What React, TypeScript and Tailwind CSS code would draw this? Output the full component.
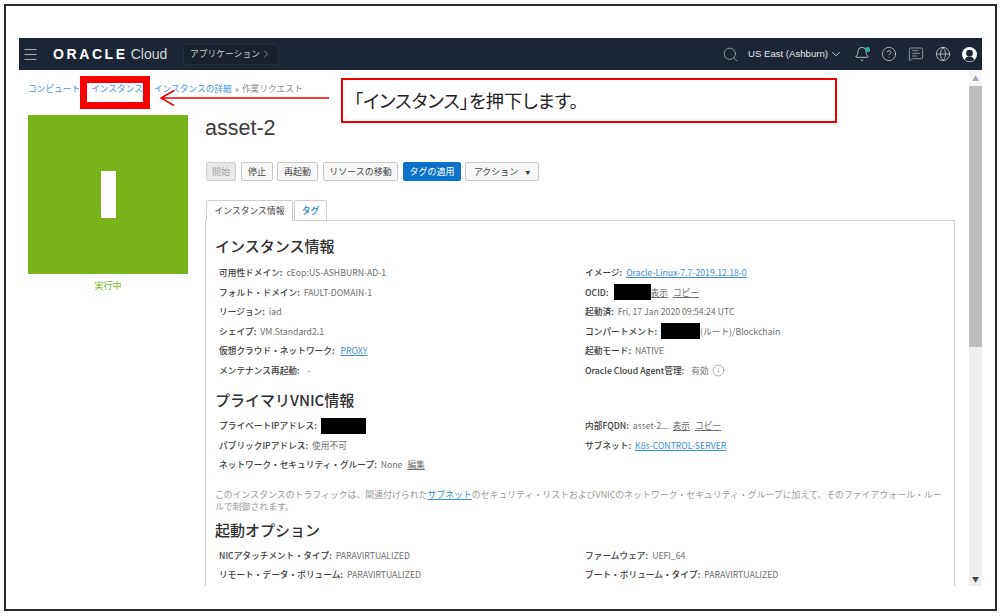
import React from "react";
import { Bell, ChevronDown, ChevronRight, CircleHelp, Globe, Info, Menu, MessageSquareText, Search } from "lucide-react";

const JP = "font-['Noto_Sans_CJK_JP','Noto_Sans',sans-serif]";

function Link(props: { text: string }) {
  return <span className="text-[#3a8fdc] underline">{props.text}</span>;
}

function Redact(props: { w: string }) {
  return <span className={`inline-block h-[16px] bg-black ${props.w}`} />;
}

function Row(props: { label: string; children?: React.ReactNode }) {
  return (
    <div className="flex h-[19.5px] items-center whitespace-nowrap">
      <span className="mr-[4px] font-medium text-[#3c3c3c]">{props.label}</span>
      <span className="flex items-center text-[#6e6e6e]">{props.children}</span>
    </div>
  );
}

function Btn(props: { text: string; w: string; kind?: "primary" | "off"; caret?: boolean }) {
  const look =
    props.kind === "primary"
      ? "bg-[#0a72c9] border-[#0a72c9] text-white"
      : props.kind === "off"
        ? "bg-[#e9e9e9] border-[#cfcfcf] text-[#a5a5a5]"
        : "bg-[#f7f7f7] border-[#c9c9c9] text-[#444]";
  return (
    <div className={`flex h-[19px] items-center justify-center rounded-[2px] border text-[9px] ${look} ${props.w}`}>
      {props.text}
      {props.caret && <span className="ml-[7px] text-[5px] text-[#333]">▼</span>}
    </div>
  );
}

function Header() {
  return (
    <div className="flex h-[32px] items-center bg-[#1b2533] text-[#e8e8e8]">
      <Menu size={17} strokeWidth={1.3} className="ml-[3px] text-[#b9bec4]" />
      <div className="ml-[14px] flex w-[114px] items-baseline whitespace-nowrap font-['Liberation_Sans',sans-serif]">
        <span className="text-[14px] font-bold tracking-[2.6px] text-white">ORACLE</span>
        <span className="ml-[3px] text-[14px] text-[#d4d6d9]">Cloud</span>
      </div>
      <div className="ml-[16px] flex h-[21px] w-[96px] items-center justify-center rounded-[2px] border border-[#262f3c] bg-[#19212c] text-[8.800px] text-[#c9cbce]">
        アプリケーション
        <ChevronRight size={12} strokeWidth={1.2} />
      </div>
      <div className="ml-auto flex items-center">
        <Search size={17} strokeWidth={1} className="mr-[9px] text-[#b8bcc2]" />
        <span className="font-['Liberation_Sans',sans-serif] text-[9.600px]">US East (Ashburn)</span>
        <ChevronDown size={14} strokeWidth={1.5} className="ml-[1px] mr-[11px]" />
        <div className="relative mr-[11px]">
          <Bell size={16} strokeWidth={1.1} />
          <span className="absolute right-[0px] top-[1px] h-[5px] w-[5px] rounded-full bg-[#33b39a]" />
        </div>
        <CircleHelp size={16} strokeWidth={1} className="mr-[11px]" />
        <MessageSquareText size={16} strokeWidth={1} className="mr-[11px] text-[#c9cbce]" />
        <Globe size={16} strokeWidth={1} className="mr-[11px]" />
        <svg width="15" height="15" viewBox="0 0 16 16" className="mr-[5px]">
          <circle cx="8" cy="8" r="8" fill="#fff" />
          <circle cx="8" cy="6.6" r="3.6" fill="#1b2533" />
          <path d="M2.8 13.6c1-2.6 3-3.4 5.2-3.4s4.200.8 5.2 3.400A8 8 0 0 1 2.800 13.600z" fill="#1b2533" />
        </svg>
      </div>
    </div>
  );
}

function Content() {
  return (
    <div className="flex min-w-0 flex-1 flex-col overflow-hidden pl-[9px]">
      <div className="flex h-[36px] shrink-0 items-center pt-[1px] text-[8.7px] text-[#8a8a8a]">
        <span className="text-[#4a94dc]">コンピュート</span>
        <span className="mx-[3px] w-[5px]">»</span>
        <span className="text-[#4a94dc]">インスタンス</span>
        <span className="mx-[3px] w-[5px]">»</span>
        <span className="text-[#4a94dc]">インスタンスの詳細</span>
        <span className="mx-[3px]">»</span>
        <span>作業リクエスト</span>
      </div>

      <div className="mt-[9px] flex shrink-0">
        <div className="w-[160px] shrink-0">
          <div className="flex h-[159px] items-center justify-center bg-[#78b31a]">
            <div className="mt-[-1px] h-[47px] w-[15px] bg-white" />
          </div>
          <div className="mt-[5px] text-center text-[9px] text-[#78b31a]">実行中</div>
        </div>

        <div className="ml-[17px] w-[750px] shrink-0">
          <h1 className="h-[47px] font-['Liberation_Sans',sans-serif] text-[21.5px] leading-[27px] text-[#3a3a3a]">asset-2</h1>
          <div className="flex pl-[1px]">
            <Btn text="開始" w="w-[30px]" kind="off" />
            <div className="ml-[5px]"><Btn text="停止" w="w-[32px]" /></div>
            <div className="ml-[4px]"><Btn text="再起動" w="w-[41px]" /></div>
            <div className="ml-[5px]"><Btn text="リソースの移動" w="w-[75px]" /></div>
            <div className="ml-[5px]"><Btn text="タグの適用" w="w-[58px]" kind="primary" /></div>
            <div className="ml-[4px]"><Btn text="アクション" w="w-[74px]" caret /></div>
          </div>

          <div className="relative z-10 mt-[19px] flex h-[21px] pl-[1px] text-[8.800px]">
            <div className="flex w-[87px] items-center justify-center rounded-t-[2px] border border-b-0 border-[#cfcfcf] bg-white text-[#444]">インスタンス情報</div>
            <div className="ml-[1px] flex w-[33px] items-center justify-center rounded-t-[2px] border border-[#cfcfcf] font-medium text-[#1f7fd6]">タグ</div>
          </div>

          <div className="mt-[-1px] h-[366px] overflow-hidden border border-b-0 border-[#d4d4d4] pl-[9px] text-[8.700px]">
            <h2 className="mt-[14px] h-[22px] text-[15px] font-medium leading-[22px] text-[#2f2f2f]">インスタンス情報</h2>
            <div className="mt-[6px] grid grid-cols-[366px_1fr] pl-[4px]">
              <div>
                <Row label="可用性ドメイン:">cEop:US-ASHBURN-AD-1</Row>
                <Row label="フォルト・ドメイン:">FAULT-DOMAIN-1</Row>
                <Row label="リージョン:">iad</Row>
                <Row label="シェイプ:">VM.Standard2.1</Row>
                <Row label="仮想クラウド・ネットワーク:"><span className="ml-[2px]"><Link text="PROXY" /></span></Row>
                <Row label="メンテナンス再起動:"><span className="ml-[4px]">-</span></Row>
              </div>
              <div>
                <Row label="イメージ:"><Link text="Oracle-Linux-7.7-2019.12.18-0" /></Row>
                <Row label="OCID:">
                  <Redact w="w-[37px] ml-[1px]" />
                  <span className="underline">表示</span>
                  <span className="ml-[5px] underline">コピー</span>
                </Row>
                <Row label="起動済:">Fri, 17 Jan 2020 09:54:24 UTC</Row>
                <Row label="コンパートメント:">
                  <Redact w="w-[39px]" />
                  (ルート)/Blockchain
                </Row>
                <Row label="起動モード:">NATIVE</Row>
                <Row label="Oracle Cloud Agent管理:">
                  <span className="ml-[3px]">有効</span>
                  <Info size={13} strokeWidth={1} className="ml-[3px]" />
                </Row>
              </div>
            </div>

            <h2 className="mt-[9px] h-[22px] text-[15px] font-medium leading-[22px] text-[#2f2f2f]">プライマリVNIC情報</h2>
            <div className="mt-[5px] grid grid-cols-[366px_1fr] pl-[4px]">
              <div>
                <Row label="プライベートIPアドレス:"><Redact w="w-[45px]" /></Row>
                <Row label="パブリックIPアドレス:">使用不可</Row>
                <Row label="ネットワーク・セキュリティ・グループ:">
                  None
                  <span className="ml-[5px] underline">編集</span>
                </Row>
              </div>
              <div>
                <Row label="内部FQDN:">
                  asset-2...
                  <span className="ml-[4px] underline">表示</span>
                  <span className="ml-[5px] underline">コピー</span>
                </Row>
                <Row label="サブネット:"><Link text="K8s-CONTROL-SERVER" /></Row>
              </div>
            </div>

            <p className="mt-[14px] w-[732px] text-[8.900px] leading-[12px] text-[#9a9a9a]">
              このインスタンスのトラフィックは、関連付けられた<Link text="サブネット" />のセキュリティ・リストおよびVNICのネットワーク・セキュリティ・グループに加えて、そのファイアウォール・ルールで制御されます。
            </p>

            <h2 className="mt-[6px] h-[22px] text-[15px] font-medium leading-[22px] text-[#2f2f2f]">起動オプション</h2>
            <div className="mt-[5px] grid grid-cols-[366px_1fr] pl-[4px]">
              <div>
                <Row label="NICアタッチメント・タイプ:">PARAVIRTUALIZED</Row>
                <Row label="リモート・データ・ボリューム:">PARAVIRTUALIZED</Row>
              </div>
              <div>
                <Row label="ファームウェア:">UEFI_64</Row>
                <Row label="ブート・ボリューム・タイプ:">PARAVIRTUALIZED</Row>
              </div>
            </div>
          </div>
        </div>
      </div>
    </div>
  );
}

function Scrollbar() {
  return (
    <div className="flex w-[13px] shrink-0 flex-col bg-[#eeeeee]">
      <div className="flex h-[16px] items-center justify-center bg-[#f5f5f5] text-[7px] text-[#a8a8a8]">▲</div>
      <div className="h-[261px] bg-[#bdbdbd]" />
      <div className="mt-auto flex h-[13px] items-center justify-center text-[7px] text-[#444]">▼</div>
    </div>
  );
}

function Annotations() {
  return (
    <>
      <div className="absolute left-[74px] top-[70px] h-[33px] w-[70px] border-[7px] border-[#fa0000]" />
      <svg className="absolute left-[153px] top-[83px]" width="170" height="18" viewBox="0 0 170 18">
        <path d="M170 9H2M15 1.500L2 9l13 7.500" fill="none" stroke="#f00000" strokeWidth="1.500" />
      </svg>
      <div className="absolute left-[335px] top-[72px] flex h-[45px] w-[496px] items-center border-2 border-[#f00000] bg-white pl-[11px] text-[18.300px] text-[#222] [font-feature-settings:'palt']">
        「インスタンス」を押下します。
      </div>
    </>
  );
}

export default function App() {
  return (
    <div className={`h-[616px] w-[1000px] overflow-hidden bg-white pl-[4px] pt-[4px] ${JP}`}>
      <div className="relative h-[607px] w-[993px] border-2 border-[#2a2a2a] bg-white pl-[13px] pt-[32px]">
        <div className="w-[963px]">
          <Header />
          <div className="flex h-[516px]">
            <Content />
            <Scrollbar />
          </div>
        </div>
        <Annotations />
      </div>
    </div>
  );
}
